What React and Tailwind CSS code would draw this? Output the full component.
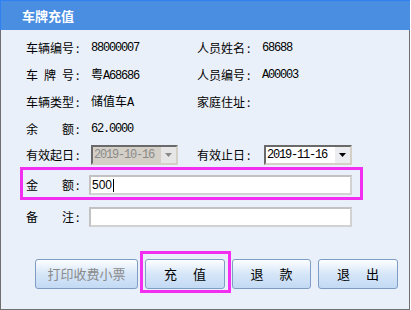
import React from "react";

const CJK = "font-['Noto_Sans_CJK_SC',sans-serif]";
const MONO = "font-['Liberation_Mono','Noto_Sans_CJK_SC',monospace] tracking-[-1.2px]";

const Label = ({ chars, width = "w-[65px]" }) => (
  <div className={`flex items-center ${width} text-[12px] text-black ${CJK}`}>
    <div className="flex justify-between w-[48px]">
      {chars.map((c, i) => (
        <span key={i}>{c}</span>
      ))}
    </div>
    <span className="ml-[2px]">:</span>
  </div>
);

const DateBox = ({ value, disabled }) => (
  <div
    className={`flex h-[20px] border-2 border-t-[#6a6a6a] border-l-[#6a6a6a] border-b-[#d4d0c8] border-r-[#d4d0c8] ${
      disabled ? "w-[87px] bg-[#d4d0c8]" : "w-[88px] bg-white"
    }`}
  >
    <div
      className={`flex-1 flex items-center pl-[1px] text-[12px] ${MONO} ${
        disabled ? "text-[#8a8a8a]" : "text-black"
      }`}
    >
      {value}
    </div>
    <div
      className={`w-[15px] flex items-center justify-center ${
        disabled ? "bg-[#e6e6e6]" : "bg-[#ecedf0]"
      }`}
    >
      <svg width="7" height="4" viewBox="0 0 7 4">
        <path d="M0 0 L7 0 L3.5 4 Z" fill={disabled ? "#8a8a8a" : "#000"} />
      </svg>
    </div>
  </div>
);

const Btn = ({ children, width, disabled }) => (
  <button
    className={`${width} h-[30px] rounded-[3px] border border-[#7d9dc4] bg-linear-to-b from-[#fdfeff] via-[#d6e6f8] to-[#c3daf4] flex items-center justify-center gap-[16px] text-[13px] ${CJK} ${
      disabled ? "text-[#8a8a8a]" : "text-black"
    }`}
  >
    {children}
  </button>
);

const InfoRow = ({ l1, v1, l2, v2 }) => (
  <div className="flex items-center h-[27px] pl-[25px]">
    <div className="flex items-center w-[171px]">
      <Label chars={l1} />
      <div className="text-[12px] text-black">{v1}</div>
    </div>
    <div className="flex items-center">
      <Label chars={l2} />
      <div className="text-[12px] text-black">{v2}</div>
    </div>
  </div>
);

export default function App() {
  return (
    <div className="w-[410px] h-[310px] flex flex-col">
      {/* title bar */}
      <div className="h-[30px] bg-[#4a8ee2] border-t border-l border-[#2f80f2] flex items-center pl-[21px]">
        <span className={`text-white font-bold text-[13px] ${CJK}`}>车牌充值</span>
      </div>

      {/* body */}
      <div className="flex-1 bg-[#eaf0f9] border-l border-r border-b border-[#6f6f6f] flex flex-col pt-[4px]">
        <InfoRow
          l1={["车", "辆", "编", "号"]}
          v1={<span className={MONO}>88000007</span>}
          l2={["人", "员", "姓", "名"]}
          v2={<span className={MONO}>68688</span>}
        />
        <InfoRow
          l1={["车", "牌", "号"]}
          v1={
            <span>
              <span className={CJK}>粤</span>
              <span className={MONO}>A68686</span>
            </span>
          }
          l2={["人", "员", "编", "号"]}
          v2={<span className={MONO}>A00003</span>}
        />
        <InfoRow
          l1={["车", "辆", "类", "型"]}
          v1={
            <span>
              <span className={CJK}>储值车</span>
              <span className={MONO}>A</span>
            </span>
          }
          l2={["家", "庭", "住", "址"]}
          v2=""
        />
        <div className="flex items-center h-[27px] pl-[25px]">
          <Label chars={["余", "额"]} />
          <span className={`text-[12px] text-black ${MONO}`}>62.0000</span>
        </div>

        {/* dates */}
        <div className="flex items-center h-[25px] pl-[25px]">
          <div className="flex items-center w-[171px]">
            <Label chars={["有", "效", "起", "日"]} />
            <DateBox value="2019-10-16" disabled />
          </div>
          <div className="flex items-center">
            <div className="w-[67px]">
              <Label chars={["有", "效", "止", "日"]} />
            </div>
            <DateBox value="2019-11-16" />
          </div>
        </div>

        {/* amount, highlighted */}
        <div className="ml-[19px] w-[343px] h-[33px] border-[3px] border-[#f22ef0] flex items-center pl-[3px] pt-[3px]">
          <Label chars={["金", "额"]} width="w-[63px]" />
          <div className="w-[263px] h-[20px] border-2 border-[#d2d2d2] border-t-[#c2c2c2] border-l-[#c2c2c2] bg-white flex items-center pl-[1px] text-[12px] text-black font-['Liberation_Sans',sans-serif]">
            500
            <span className="w-px h-[13px] bg-black ml-[1px]" />
          </div>
        </div>

        {/* remark */}
        <div className="flex items-center h-[20px] mt-[7px] pl-[25px]">
          <Label chars={["备", "注"]} width="w-[63px]" />
          <div className="w-[263px] h-[20px] border-2 border-[#d2d2d2] border-t-[#c2c2c2] border-l-[#c2c2c2] bg-white" />
        </div>

        {/* buttons */}
        <div className="flex items-center mt-[32px] pl-[34px]">
          <Btn width="w-[103px]" disabled>
            <span>打印收费小票</span>
          </Btn>
          <div className="relative ml-[7px]">
            <Btn width="w-[80px]">
              <span>充</span>
              <span>值</span>
            </Btn>
            <div className="absolute -left-[5px] -top-[8px] w-[91px] h-[42px] border-[3px] border-[#f22ef0]" />
          </div>
          <div className="ml-[7px]">
            <Btn width="w-[79px]">
              <span>退</span>
              <span>款</span>
            </Btn>
          </div>
          <div className="ml-[7px]">
            <Btn width="w-[80px]">
              <span>退</span>
              <span>出</span>
            </Btn>
          </div>
        </div>
      </div>
    </div>
  );
}
